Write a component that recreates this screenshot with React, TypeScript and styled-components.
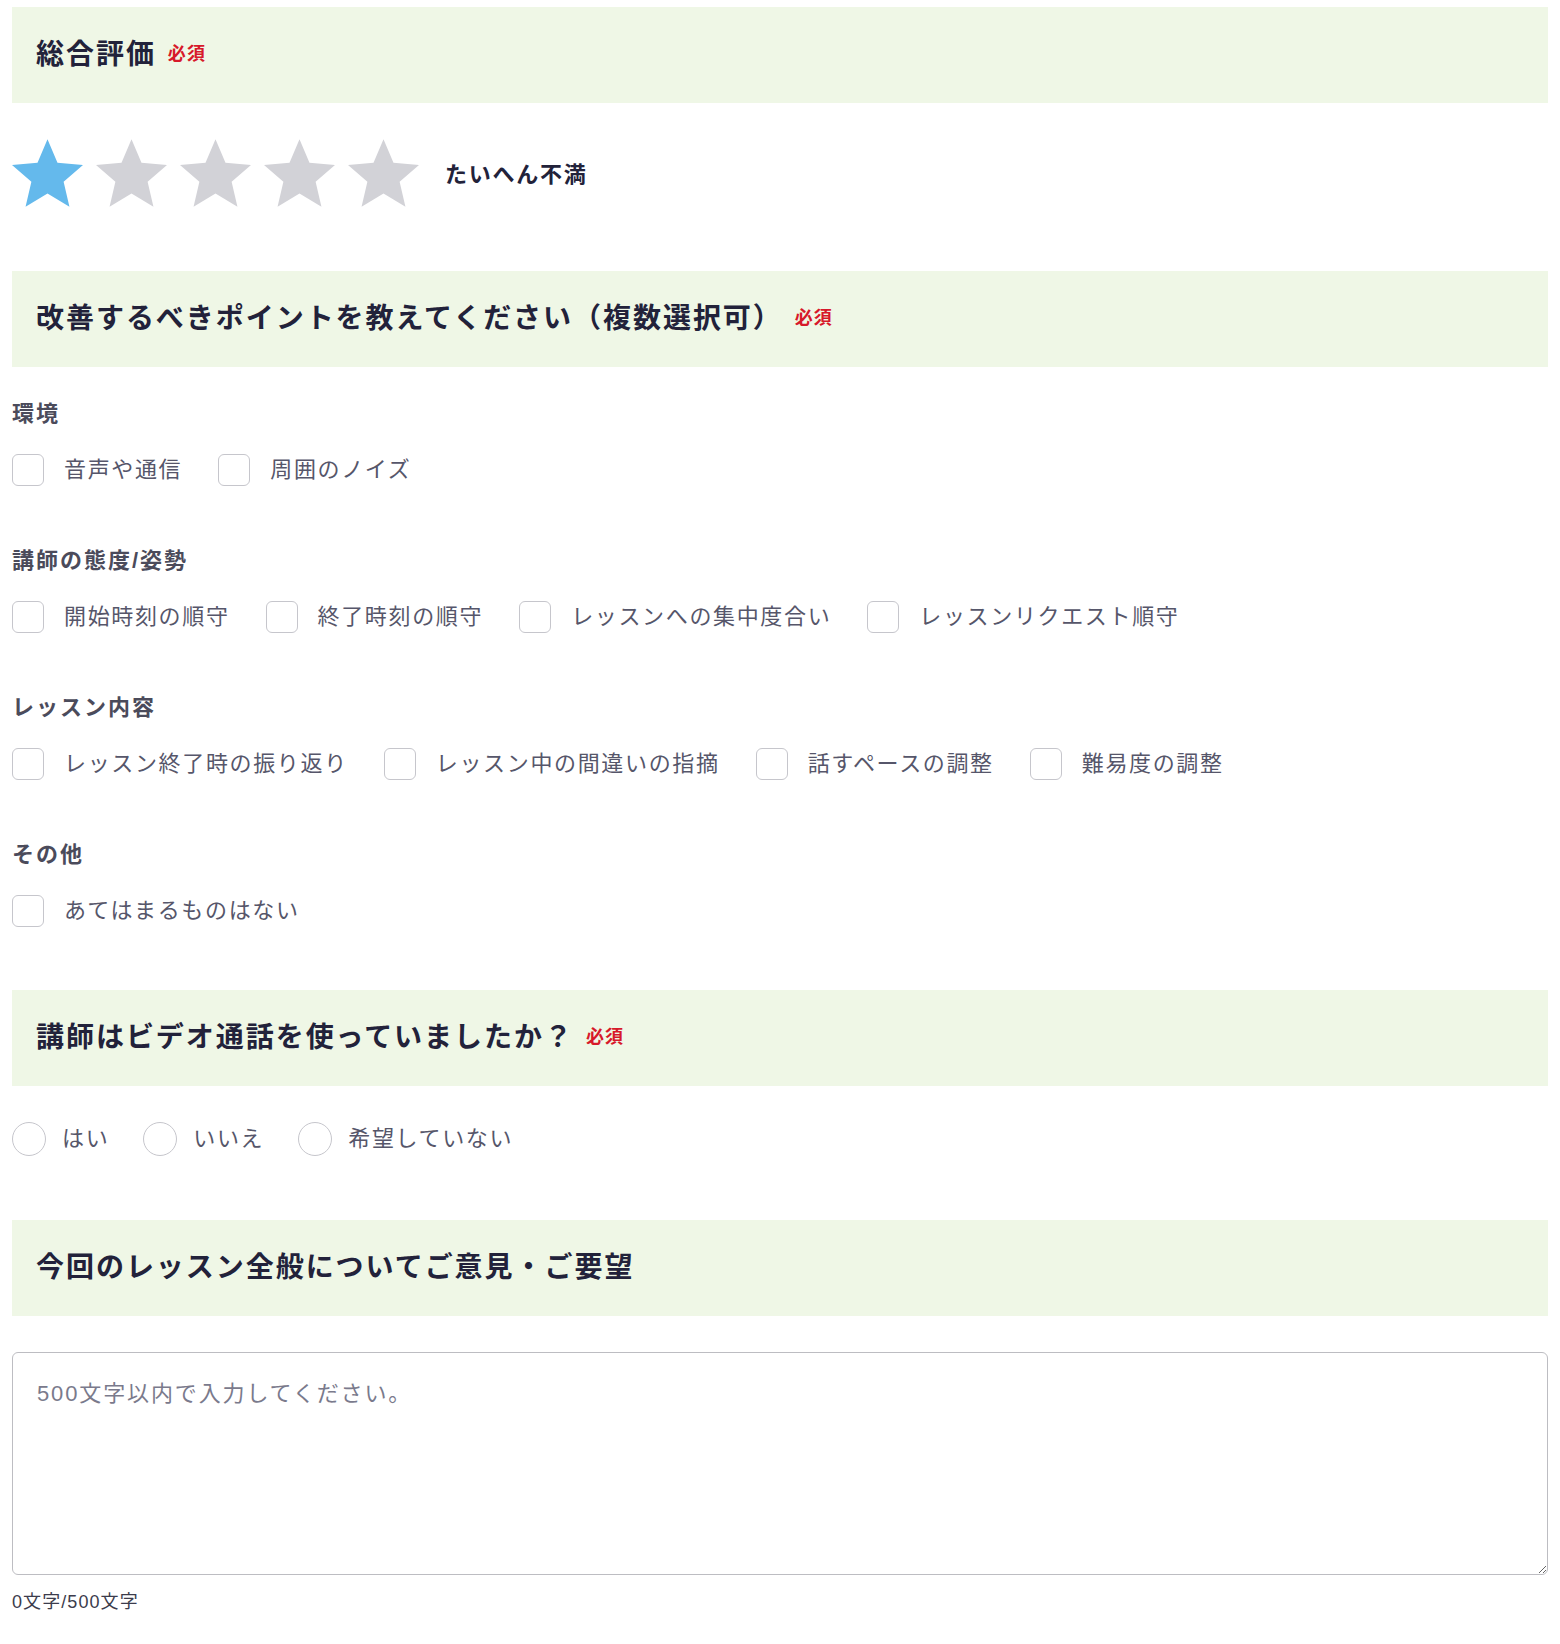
import styled, { createGlobalStyle } from "styled-components";

const GlobalStyle = createGlobalStyle`
  body {
    margin: 0;
    background: #fff;
    font-family: "Liberation Sans", "Noto Sans CJK JP", sans-serif;
    color: #22223a;
  }
`;

const groups = [
  { label: "環境", options: ["音声や通信", "周囲のノイズ"] },
  {
    label: "講師の態度/姿勢",
    options: [
      "開始時刻の順守",
      "終了時刻の順守",
      "レッスンへの集中度合い",
      "レッスンリクエスト順守",
    ],
  },
  {
    label: "レッスン内容",
    options: [
      "レッスン終了時の振り返り",
      "レッスン中の間違いの指摘",
      "話すペースの調整",
      "難易度の調整",
    ],
  },
  { label: "その他", options: ["あてはまるものはない"] },
];

function Star({ filled }: { filled: boolean }) {
  return (
    <StarIcon viewBox="2 2 20 19" filled={filled}>
      <path d="M12 17.27L18.18 21l-1.64-7.03L22 9.24l-7.19-.61L12 2 9.19 8.63 2 9.24l5.46 4.73L5.82 21z" />
    </StarIcon>
  );
}

export default function App() {
  return (
    <Page>
      <GlobalStyle />

      <Header>
        <Title>総合評価</Title>
        <Required>必須</Required>
      </Header>
      <StarRow>
        {[1, 2, 3, 4, 5].map((n) => (
          <Star key={n} filled={n <= 1} />
        ))}
        <RatingText>たいへん不満</RatingText>
      </StarRow>

      <Header>
        <Title>改善するべきポイントを教えてください（複数選択可）</Title>
        <Required>必須</Required>
      </Header>
      <CheckSection>
        {groups.map((group) => (
          <div key={group.label}>
            <GroupLabel>{group.label}</GroupLabel>
            <OptionRow>
              {group.options.map((option) => (
                <Option key={option}>
                  <CheckBox />
                  <OptionText>{option}</OptionText>
                </Option>
              ))}
            </OptionRow>
          </div>
        ))}
      </CheckSection>

      <Header>
        <Title>講師はビデオ通話を使っていましたか？</Title>
        <Required>必須</Required>
      </Header>
      <RadioRow>
        {["はい", "いいえ", "希望していない"].map((option) => (
          <RadioOption key={option}>
            <RadioCircle />
            <OptionText>{option}</OptionText>
          </RadioOption>
        ))}
      </RadioRow>

      <Header>
        <Title>今回のレッスン全般についてご意見・ご要望</Title>
      </Header>
      <CommentSection>
        <CommentBox placeholder="500文字以内で入力してください。" />
        <Counter>0文字/500文字</Counter>
      </CommentSection>
    </Page>
  );
}

const Page = styled.div`
  padding: 7px 12px 0;
`;

const Header = styled.div`
  box-sizing: border-box;
  display: flex;
  align-items: center;
  height: 96px;
  padding: 0 24px 6px;
  background: #eff7e6;
`;

const Title = styled.h2`
  margin: 0;
  font-size: 28px;
  font-weight: 700;
  letter-spacing: 0.07em;
  color: #22223a;
`;

const Required = styled.span`
  margin-left: 12px;
  font-size: 18px;
  font-weight: 700;
  letter-spacing: 0.06em;
  color: #d7192a;
`;

const StarRow = styled.div`
  display: flex;
  align-items: center;
  gap: 13px;
  padding: 36px 0 64px;
`;

const StarIcon = styled.svg<{ filled: boolean }>`
  width: 71px;
  height: 68px;
  fill: ${(props) => (props.filled ? "#64b9ec" : "#d2d2d7")};
`;

const RatingText = styled.span`
  margin-left: 13px;
  padding-bottom: 3px;
  font-size: 22px;
  font-weight: 700;
  letter-spacing: 0.08em;
  color: #22223a;
`;

const CheckSection = styled.div`
  display: flex;
  flex-direction: column;
  gap: 59px;
  padding: 32px 0 62px;
`;

const GroupLabel = styled.div`
  height: 30px;
  line-height: 30px;
  margin-bottom: 24px;
  font-size: 22px;
  font-weight: 700;
  letter-spacing: 0.09em;
  color: #4b4b5b;
`;

const OptionRow = styled.div`
  display: flex;
  flex-wrap: wrap;
  gap: 36px;
`;

const Option = styled.label`
  display: flex;
  align-items: center;
  height: 34px;
`;

const CheckBox = styled.span`
  box-sizing: border-box;
  width: 32px;
  height: 32px;
  border: 1px solid #c6c6cc;
  border-radius: 6px;
  background: #fff;
`;

const OptionText = styled.span`
  margin-left: 20px;
  font-size: 22px;
  line-height: 34px;
  letter-spacing: 0.075em;
  color: #56566a;
`;

const RadioRow = styled.div`
  display: flex;
  gap: 34px;
  padding: 36px 0 64px;
`;

const RadioOption = styled.label`
  display: flex;
  align-items: center;
  height: 34px;

  ${OptionText} {
    margin-left: 16px;
  }
`;

const RadioCircle = styled.span`
  box-sizing: border-box;
  width: 34px;
  height: 34px;
  border: 1px solid #c6c6cc;
  border-radius: 50%;
  background: #fff;
`;

const CommentSection = styled.div`
  padding-top: 36px;
`;

const CommentBox = styled.textarea`
  display: block;
  box-sizing: border-box;
  width: 100%;
  height: 223px;
  padding: 24px;
  border: 1px solid #bdbdc2;
  border-radius: 6px;
  font-family: "Liberation Sans", "Noto Sans CJK JP", sans-serif;
  font-size: 22px;
  line-height: 1.5;
  letter-spacing: 0.085em;
  color: #22223a;
  outline: none;

  &::placeholder {
    color: #7a7a8c;
  }
`;

const Counter = styled.div`
  margin-top: 14px;
  font-size: 18px;
  line-height: 27px;
  letter-spacing: 0.06em;
  color: #3c3c4c;
`;
